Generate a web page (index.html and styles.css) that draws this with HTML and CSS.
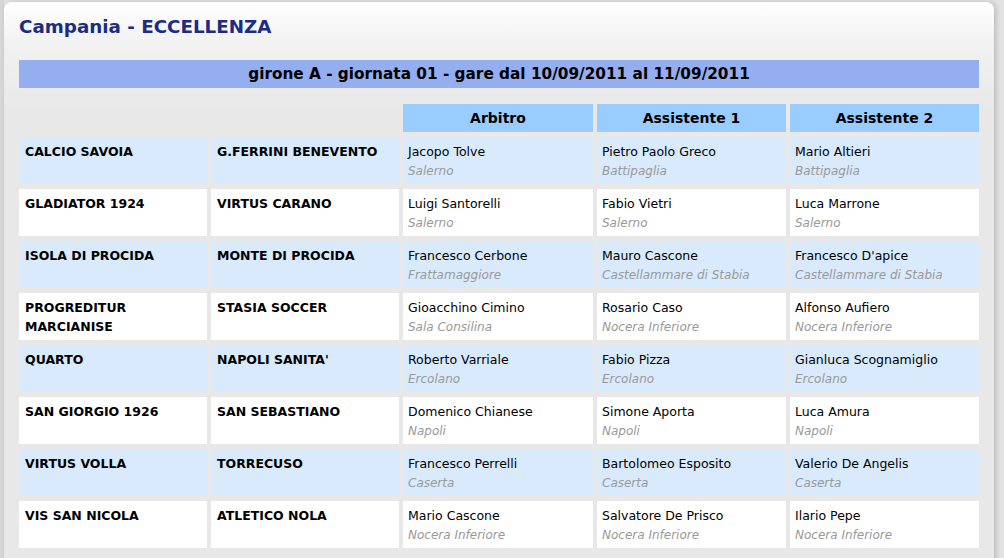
FILE: index.html
```html
<!DOCTYPE html>
<html lang="it">
<head>
<meta charset="utf-8">
<title>Campania - ECCELLENZA</title>
<link rel="stylesheet" href="styles.css">
</head>
<body>
<div class="panel">
  <h1 class="title">Campania - ECCELLENZA</h1>
  <div class="bar">girone A - giornata 01 - gare dal 10/09/2011 al 11/09/2011</div>
  <div class="grid">
    <div class="blank"></div><div class="blank"></div>
    <div class="head">Arbitro</div><div class="head">Assistente 1</div><div class="head">Assistente 2</div>

    <div class="team alt">CALCIO SAVOIA</div><div class="team alt">G.FERRINI BENEVENTO</div>
    <div class="ref alt"><span class="name">Jacopo Tolve</span><span class="city">Salerno</span></div>
    <div class="ref alt"><span class="name">Pietro Paolo Greco</span><span class="city">Battipaglia</span></div>
    <div class="ref alt"><span class="name">Mario Altieri</span><span class="city">Battipaglia</span></div>

    <div class="team">GLADIATOR 1924</div><div class="team">VIRTUS CARANO</div>
    <div class="ref"><span class="name">Luigi Santorelli</span><span class="city">Salerno</span></div>
    <div class="ref"><span class="name">Fabio Vietri</span><span class="city">Salerno</span></div>
    <div class="ref"><span class="name">Luca Marrone</span><span class="city">Salerno</span></div>

    <div class="team alt">ISOLA DI PROCIDA</div><div class="team alt">MONTE DI PROCIDA</div>
    <div class="ref alt"><span class="name">Francesco Cerbone</span><span class="city">Frattamaggiore</span></div>
    <div class="ref alt"><span class="name">Mauro Cascone</span><span class="city">Castellammare di Stabia</span></div>
    <div class="ref alt"><span class="name">Francesco D'apice</span><span class="city">Castellammare di Stabia</span></div>

    <div class="team">PROGREDITUR MARCIANISE</div><div class="team">STASIA SOCCER</div>
    <div class="ref"><span class="name">Gioacchino Cimino</span><span class="city">Sala Consilina</span></div>
    <div class="ref"><span class="name">Rosario Caso</span><span class="city">Nocera Inferiore</span></div>
    <div class="ref"><span class="name">Alfonso Aufiero</span><span class="city">Nocera Inferiore</span></div>

    <div class="team alt">QUARTO</div><div class="team alt">NAPOLI SANITA'</div>
    <div class="ref alt"><span class="name">Roberto Varriale</span><span class="city">Ercolano</span></div>
    <div class="ref alt"><span class="name">Fabio Pizza</span><span class="city">Ercolano</span></div>
    <div class="ref alt"><span class="name">Gianluca Scognamiglio</span><span class="city">Ercolano</span></div>

    <div class="team">SAN GIORGIO 1926</div><div class="team">SAN SEBASTIANO</div>
    <div class="ref"><span class="name">Domenico Chianese</span><span class="city">Napoli</span></div>
    <div class="ref"><span class="name">Simone Aporta</span><span class="city">Napoli</span></div>
    <div class="ref"><span class="name">Luca Amura</span><span class="city">Napoli</span></div>

    <div class="team alt">VIRTUS VOLLA</div><div class="team alt">TORRECUSO</div>
    <div class="ref alt"><span class="name">Francesco Perrelli</span><span class="city">Caserta</span></div>
    <div class="ref alt"><span class="name">Bartolomeo Esposito</span><span class="city">Caserta</span></div>
    <div class="ref alt"><span class="name">Valerio De Angelis</span><span class="city">Caserta</span></div>

    <div class="team">VIS SAN NICOLA</div><div class="team">ATLETICO NOLA</div>
    <div class="ref"><span class="name">Mario Cascone</span><span class="city">Nocera Inferiore</span></div>
    <div class="ref"><span class="name">Salvatore De Prisco</span><span class="city">Nocera Inferiore</span></div>
    <div class="ref"><span class="name">Ilario Pepe</span><span class="city">Nocera Inferiore</span></div>
  </div>
</div>
</body>
</html>
```

FILE: styles.css
```css
html, body {
  margin: 0;
  padding: 0;
}
body {
  background: #e2e2e2;
  box-shadow: inset 4px 0 0 #d6d6d6;
  min-height: 558px;
  padding: 2px 10px 0 4px;
  box-sizing: border-box;
  overflow: hidden;
  font-family: "DejaVu Sans", Verdana, sans-serif;
}
.panel {
  border-radius: 8px 8px 0 0;
  background: linear-gradient(#ffffff 0, #f2f2f2 40px, #e8e8e8 110px, #e8e8e8 100%);
  box-shadow: 2px 0 5px rgba(0, 0, 0, 0.18);
  padding: 12px 15px 9px 15px;
  min-height: 560px;
  box-sizing: border-box;
}
.title {
  margin: 0;
  font-family: "DejaVu Sans", sans-serif;
  font-size: 18.3px;
  font-weight: bold;
  color: #1c2c86;
  line-height: 25px;
}
.bar {
  margin-top: 21px;
  height: 28px;
  line-height: 28px;
  background: #94aef0;
  text-align: center;
  font-family: "DejaVu Sans", sans-serif;
  font-weight: bold;
  font-size: 15.3px;
  color: #000;
}
.grid {
  margin-top: 16px;
  display: grid;
  grid-template-columns: 188px 188px 190px 189px 189px;
  grid-template-rows: 28px repeat(8, 48px);
  gap: 4px;
}
.grid > div:nth-child(n+6) {
  margin-top: 1px;
}
.head {
  background: #99ccff;
  text-align: center;
  font-weight: bold;
  font-size: 14px;
  line-height: 28px;
  color: #000;
}
.team {
  background: #ffffff;
  font-weight: bold;
  font-size: 12.5px;
  line-height: 19px;
  padding: 5px 6px 0 6px;
  color: #000;
}
.ref {
  background: #ffffff;
  padding: 5px 5px 0 5px;
  display: flex;
  flex-direction: column;
  font-size: 12.5px;
  line-height: 19px;
}
.alt {
  background: #d8eafc;
}
.name {
  color: #000;
}
.city {
  color: #999999;
  font-style: italic;
  font-size: 12px;
  margin-top: 1px;
}
```
